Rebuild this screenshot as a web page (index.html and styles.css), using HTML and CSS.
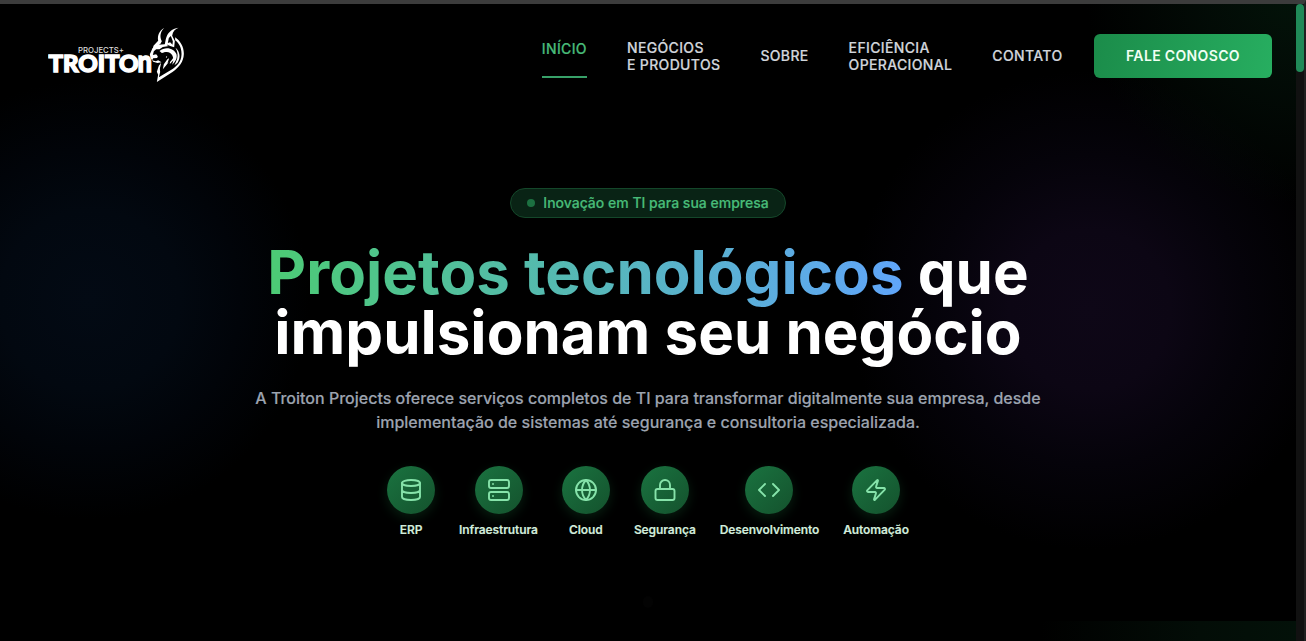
FILE: index.html
```html
<!DOCTYPE html>
<html lang="pt-BR">
<head>
<meta charset="utf-8">
<title>Troiton Projects</title>
<link rel="stylesheet" href="styles.css">
</head>
<body>
<div class="page">
  <div class="view">
    <header class="header">
      <svg class="logo" width="138" height="56" viewBox="0 0 138 56" role="img" aria-label="Projects+ Troiton">
        <text class="logo-small" x="30" y="26.5" textLength="46" lengthAdjust="spacingAndGlyphs">PROJECTS+</text>
        <text class="logo-big" x="0.5" y="46.3" textLength="90" lengthAdjust="spacingAndGlyphs">TROITO</text>
        <text class="logo-big logo-n" x="89.5" y="46.3" textLength="14.5" lengthAdjust="spacingAndGlyphs">n</text>
        <g transform="translate(93.5 -4.3) scale(.3333)" fill="#fff">
          <path d="M68 19C54 27 47 41 50 57L36 72L33 84L43 77L57 66L61 59C54 45 56 31 68 19Z"/>
          <path d="M111 18C91 20 77 34 73 52L69 72L78 69L86 73L98 77L100 58L92 42C94 29 101 22 111 18ZM79 64L82 49L88 43L94 59L93 69L86 62Z" fill-rule="evenodd"/>
          <path d="M101 47C117 58 128 77 127 98C126 121 113 137 93 151L46 181L50 159L46 150L52 132L59 123L55 141L56 151L52 167L87 146C108 133 119 119 120 99C121 79 112 64 101 56Z"/>
          <path d="M33 80L50 69L70 68L82 73L64 76L54 83L44 83L37 89L34 100L44 98L49 104L47 109L35 110L32 116L43 119L50 116L60 122L48 124L35 120L27 109L25 98Z"/>
          <path d="M54 88C72 72 99 80 105 98C108 109 102 121 92 129L96 116L85 127L86 116L73 132L64 143L67 128L76 115L82 105L73 109L76 99L67 102L72 92L61 94Z"/>
          <path d="M102 78C116 90 118 108 108 123L99 131L107 111C110 99 108 89 102 78Z"/>
          <path d="M62 96C72 87 88 90 93 102L95 109L88 119L78 125L83 110L74 114L77 103L69 105Z" fill="#000"/>
        </g>
      </svg>
      <nav class="nav">
        <a class="link active">INÍCIO</a>
        <a class="link">NEGÓCIOS<br>E PRODUTOS</a>
        <a class="link">SOBRE</a>
        <a class="link">EFICIÊNCIA<br>OPERACIONAL</a>
        <a class="link">CONTATO</a>
      </nav>
      <a class="cta">FALE CONOSCO</a>
    </header>
    <main class="hero">
      <div class="badge"><span class="dot"></span>Inovação em TI para sua empresa</div>
      <h1 class="title"><span class="gradient">Projetos tecnológicos</span> que<br>impulsionam seu negócio</h1>
      <p class="lead">A Troiton Projects oferece serviços completos de TI para transformar digitalmente sua empresa, desde<br>implementação de sistemas até segurança e consultoria especializada.</p>
      <div class="services">
        <div class="service"><div class="disc"><svg class="icon" viewBox="0 0 24 24"><ellipse cx="12" cy="5" rx="9" ry="3"/><path d="M21 12c0 1.66-4 3-9 3s-9-1.34-9-3M3 5v14c0 1.66 4 3 9 3s9-1.34 9-3V5"/></svg></div><span class="name">ERP</span></div>
        <div class="service"><div class="disc"><svg class="icon" viewBox="0 0 24 24"><rect x="2" y="2" width="20" height="8" rx="2"/><rect x="2" y="14" width="20" height="8" rx="2"/><path d="M6 6h.01M6 18h.01"/></svg></div><span class="name">Infraestrutura</span></div>
        <div class="service"><div class="disc"><svg class="icon" viewBox="0 0 24 24"><circle cx="12" cy="12" r="10"/><path d="M2 12h20M12 2a15.3 15.3 0 0 1 4 10 15.3 15.3 0 0 1-4 10 15.3 15.3 0 0 1-4-10 15.3 15.3 0 0 1 4-10z"/></svg></div><span class="name">Cloud</span></div>
        <div class="service"><div class="disc"><svg class="icon" viewBox="0 0 24 24"><rect x="2.5" y="11" width="19" height="11" rx="2"/><path d="M7 11V7a5 5 0 0 1 10 0v4"/></svg></div><span class="name">Segurança</span></div>
        <div class="service"><div class="disc"><svg class="icon" viewBox="0 0 24 24"><path d="m16 18 6-6-6-6M8 6l-6 6 6 6"/></svg></div><span class="name">Desenvolvimento</span></div>
        <div class="service"><div class="disc"><svg class="icon" viewBox="0 0 24 24"><path d="M4 14a1 1 0 0 1-.78-1.63l9.9-10.2a.5.5 0 0 1 .86.46l-1.92 6.02A1 1 0 0 0 13 10h7a1 1 0 0 1 .78 1.63l-9.9 10.2a.5.5 0 0 1-.86-.46l1.92-6.02A1 1 0 0 0 11 14z"/></svg></div><span class="name">Automação</span></div>
      </div>
      <span class="scroll-dot"></span>
    </main>
    <div class="next"></div>
  </div>
  <div class="track"><div class="thumb"></div></div>
</div>
</body>
</html>
```
FILE: styles.css
```css
* { box-sizing: border-box; }
body { margin: 0; background: #000; font-family: Inter, "Liberation Sans", sans-serif; }
.page { display: flex; width: 1306px; height: 641px; overflow: hidden; border-top: 4px solid #3c3c3c; border-right: 2px solid #202020; }
.view {
  display: flex; flex-direction: column; width: 1296px;
  background:
    radial-gradient(circle at 1296px -10px, rgba(3,19,9,1), rgba(3,15,8,.8) 80px, transparent 210px),
    radial-gradient(circle at 1090px 306px, #0e0717 0, #0c0614 80px, #05030a 155px, transparent 240px),
    radial-gradient(circle at 90px 296px, #030a14 0, #020810 90px, #010409 150px, transparent 220px),
    #000;
}
.header { display: flex; align-items: center; height: 104px; padding: 0 24px 0 48px; }
.logo { display: block; margin-top: -4px; }
.logo-small { fill: #ddd; font-size: 8px; font-weight: 500; }
.logo-big { fill: #fff; stroke: #fff; stroke-width: 1.4; font-family: Lato, sans-serif; font-size: 23px; font-weight: 900; }
.logo-n { font-size: 31px; }
.nav { display: flex; align-items: center; gap: 40px; margin-left: auto; margin-right: -.5px; }
.link { color: #d1d5db; font-size: 14px; font-weight: 500; line-height: 17.5px; letter-spacing: .35px; -webkit-text-stroke: .2px; }
.active { height: 44px; padding-top: 6px; color: #48bb78; border-bottom: 2px solid #38a169; }
.cta {
  display: flex; align-items: center; justify-content: center; width: 178px; height: 44px; padding-bottom: 2px; margin-left: 32px;
  border-radius: 6px; background: linear-gradient(100deg, #1b8c4a, #27ae60);
  color: #f0fff4; font-size: 14px; font-weight: 600; letter-spacing: .35px;
}
.hero { display: flex; flex-direction: column; align-items: center; height: 513px; padding-top: 80px; }
.badge {
  display: flex; align-items: center; justify-content: center; gap: 8px; width: 276px; height: 30px;
  border: 1px solid #14472a; border-radius: 15px; background: #092315;
  color: #48bb78; font-size: 14px; font-weight: 500; line-height: 20px; -webkit-text-stroke: .2px;
  padding-bottom: 1px;
}
.dot { width: 8px; height: 8px; border-radius: 50%; background: #1c7041; }
.title { margin: 24px 0 0; color: #fff; font-size: 60px; font-weight: 700; line-height: 60px; text-align: center; white-space: nowrap; }
.gradient { background: linear-gradient(to right, #4ccb74, #60a5fa); background-clip: text; -webkit-background-clip: text; color: transparent; }
.lead { margin: 24px 0 0; color: #9ca3af; font-size: 16px; font-weight: 500; line-height: 24px; text-align: center; white-space: nowrap; -webkit-text-stroke: .15px; }
.services { display: flex; gap: 24px; margin-top: 32px; }
.service { display: flex; flex-direction: column; align-items: center; gap: 8px; }
.disc {
  display: flex; align-items: center; justify-content: center; width: 48px; height: 48px; border-radius: 50%;
  background: linear-gradient(135deg, #1a7340, #14522d); box-shadow: 0 4px 12px rgba(22,101,52,.3);
}
.icon { width: 24px; height: 24px; fill: none; stroke: #86e3aa; stroke-width: 1.9; stroke-linecap: round; stroke-linejoin: round; }
.name { color: #d2ecdc; font-size: 12px; font-weight: 600; line-height: 16px; letter-spacing: -.09px; -webkit-text-stroke: .15px; }
.scroll-dot { width: 10px; height: 12px; margin-top: 58px; border-radius: 5px; background: #030303; }
.next { flex: 1; background: linear-gradient(to right, transparent 1040px, #030d07 1200px, #031109); }
.track { width: 8px; background: #111; }
.thumb { height: 68px; border-radius: 4px; background: #208a58; }
```
